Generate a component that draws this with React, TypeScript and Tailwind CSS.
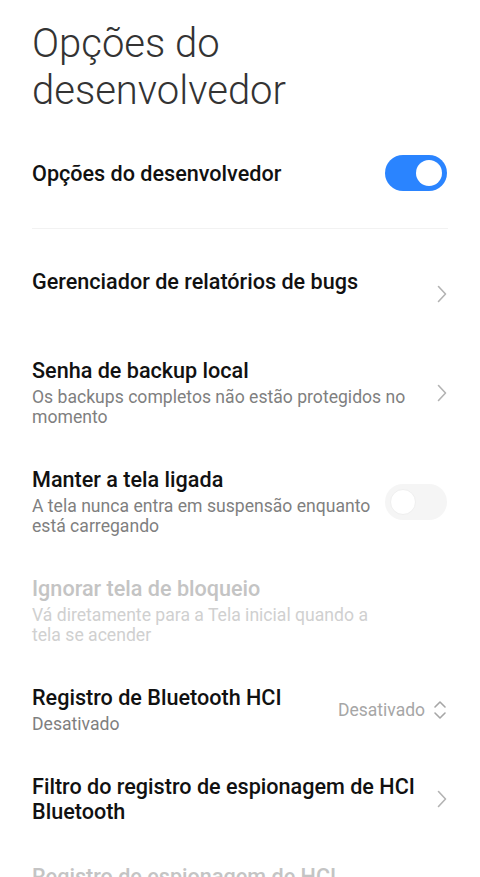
import React from "react";

const Chevron = () => (
  <svg width="10" height="18" viewBox="0 0 10 18" fill="none" className="shrink-0">
    <path d="M1.5 1.5 L8.5 9 L1.5 16.5" stroke="#b3b3b3" strokeWidth="1.6" strokeLinecap="round" strokeLinejoin="round" />
  </svg>
);

const UpDown = () => (
  <svg width="14" height="22" viewBox="0 0 14 22" fill="none" className="shrink-0">
    <path d="M2 8 L7 3 L12 8" stroke="#a6a6a6" strokeWidth="1.6" strokeLinecap="round" strokeLinejoin="round" />
    <path d="M2 14 L7 19 L12 14" stroke="#a6a6a6" strokeWidth="1.6" strokeLinecap="round" strokeLinejoin="round" />
  </svg>
);

const Toggle = ({ on }: { on: boolean }) => (
  <div
    className={`flex h-[36px] w-[62px] shrink-0 items-center rounded-full px-[5px] ${
      on ? "justify-end bg-[#2a84ff]" : "justify-start bg-[#f5f5f5]"
    }`}
  >
    <div
      className={`h-[26px] w-[26px] rounded-full bg-white ${on ? "" : "border border-[#efefef]"}`}
    />
  </div>
);

type Row = {
  title: string;
  summary?: string;
  keepSpace?: boolean;
  disabled?: boolean;
  right?: React.ReactNode;
};

const rows: Row[] = [
  { title: "Gerenciador de relatórios de bugs", keepSpace: true, right: <Chevron /> },
  {
    title: "Senha de backup local",
    summary: "Os backups completos não estão protegidos no momento",
    right: <Chevron />,
  },
  {
    title: "Manter a tela ligada",
    summary: "A tela nunca entra em suspensão enquanto está carregando",
    right: <Toggle on={false} />,
  },
  {
    title: "Ignorar tela de bloqueio",
    summary: "Vá diretamente para a Tela inicial quando a tela se acender",
    disabled: true,
  },
  {
    title: "Registro de Bluetooth HCI",
    summary: "Desativado",
    right: (
      <div className="flex items-center gap-[8px]">
        <span className="text-[17.5px] leading-[20px] text-[#a6a6a6]">Desativado</span>
        <UpDown />
      </div>
    ),
  },
  { title: "Filtro do registro de espionagem de HCI Bluetooth", right: <Chevron /> },
  { title: "Registro de espionagem de HCI", disabled: true },
];

export default function App() {
  return (
    <div
      className="h-[877px] w-[480px] overflow-hidden bg-white"
      style={{ fontFamily: "Roboto, 'Noto Sans', sans-serif" }}
    >
      <h1 className="px-[32px] pt-[20px] text-[40px] font-light leading-[47px] text-[#333333]">
        Opções do
        <br />
        desenvolvedor
      </h1>

      <div className="mt-[41px] flex items-center justify-between pl-[32px] pr-[33px]">
        <span className="text-[21.6px] font-medium leading-[25px] text-[#111111]">
          Opções do desenvolvedor
        </span>
        <Toggle on />
      </div>

      <div className="mx-[32px] mt-[37px] h-px w-[416px] bg-[#f2f2f2]" />

      <div className="pt-[20px]">
        {rows.map((r) => (
          <div key={r.title} className="flex items-center gap-[10px] py-[20px] pl-[32px] pr-[33px]">
            <div className="min-w-0 flex-1">
              <div
                className={`text-[21.6px] font-medium leading-[25px] ${
                  r.disabled ? "text-[#c4c4c4]" : "text-[#111111]"
                }`}
              >
                {r.title}
              </div>
              {r.summary && (
                <div
                  className={`mt-[4px] text-[17.6px] leading-[20px] ${
                    r.disabled ? "max-w-[350px] text-[#d0d0d0]" : "max-w-[376px] text-[#7f7f7f]"
                  }`}
                >
                  {r.summary}
                </div>
              )}
              {r.keepSpace && <div className="mt-[4px] h-[20px]" />}
            </div>
            {r.right}
          </div>
        ))}
      </div>
    </div>
  );
}
